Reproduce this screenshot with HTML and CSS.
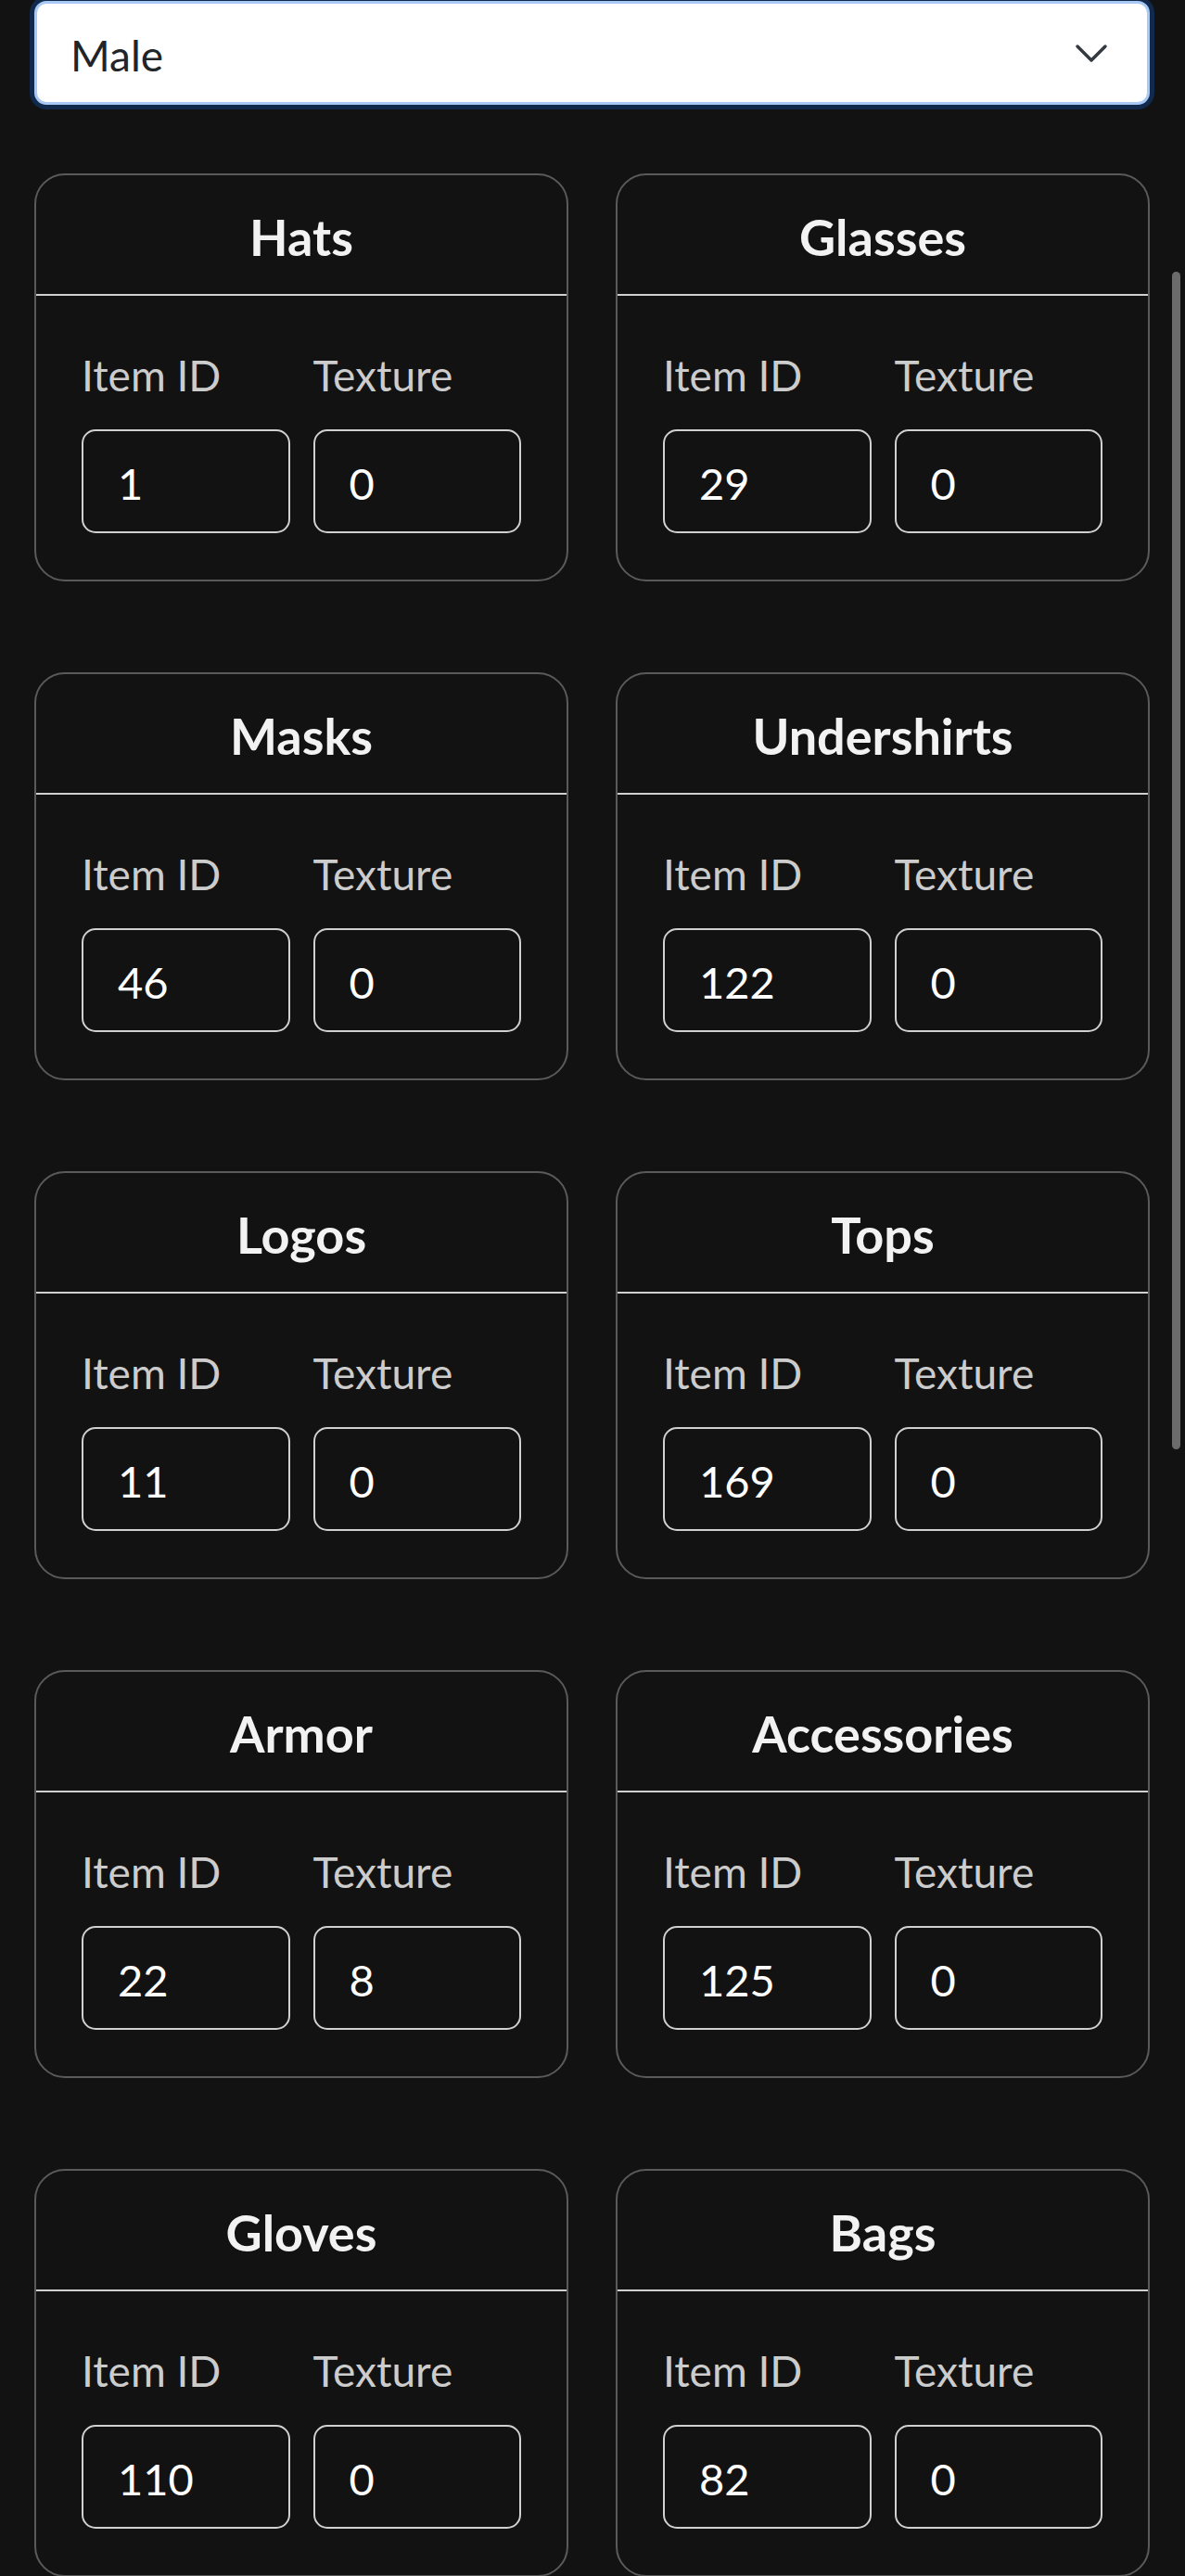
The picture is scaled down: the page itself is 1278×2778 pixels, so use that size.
FILE: index.html
```html
<!DOCTYPE html>
<html lang="en">
<head>
  <meta charset="UTF-8" />
  <meta name="viewport" content="width=device-width, initial-scale=1.0"/>
  <title>Clothing Editor</title>
  <link rel="stylesheet" href="styles.css">
</head>
<body>

<div class="page">
  <div class="select-wrap">
    <select class="gender-select" id="gender">
      <option selected>Male</option>
      <option>Female</option>
    </select>
    <svg class="chevron" width="36" height="22" viewBox="0 0 36 22">
      <polyline points="3,3 18,18 33,3" fill="none" stroke="#343a40" stroke-width="3.5" stroke-linecap="round" stroke-linejoin="round"/>
    </svg>
  </div>

  <div class="card-grid">
    <div class="card">
      <div class="card-header">Hats</div>
      <div class="card-body">
        <div class="field"><label>Item ID</label><input type="text" value="1"></div>
        <div class="field"><label>Texture</label><input type="text" value="0"></div>
      </div>
    </div>

    <div class="card">
      <div class="card-header">Glasses</div>
      <div class="card-body">
        <div class="field"><label>Item ID</label><input type="text" value="29"></div>
        <div class="field"><label>Texture</label><input type="text" value="0"></div>
      </div>
    </div>

    <div class="card">
      <div class="card-header">Masks</div>
      <div class="card-body">
        <div class="field"><label>Item ID</label><input type="text" value="46"></div>
        <div class="field"><label>Texture</label><input type="text" value="0"></div>
      </div>
    </div>

    <div class="card">
      <div class="card-header">Undershirts</div>
      <div class="card-body">
        <div class="field"><label>Item ID</label><input type="text" value="122"></div>
        <div class="field"><label>Texture</label><input type="text" value="0"></div>
      </div>
    </div>

    <div class="card">
      <div class="card-header">Logos</div>
      <div class="card-body">
        <div class="field"><label>Item ID</label><input type="text" value="11"></div>
        <div class="field"><label>Texture</label><input type="text" value="0"></div>
      </div>
    </div>

    <div class="card">
      <div class="card-header">Tops</div>
      <div class="card-body">
        <div class="field"><label>Item ID</label><input type="text" value="169"></div>
        <div class="field"><label>Texture</label><input type="text" value="0"></div>
      </div>
    </div>

    <div class="card">
      <div class="card-header">Armor</div>
      <div class="card-body">
        <div class="field"><label>Item ID</label><input type="text" value="22"></div>
        <div class="field"><label>Texture</label><input type="text" value="8"></div>
      </div>
    </div>

    <div class="card">
      <div class="card-header">Accessories</div>
      <div class="card-body">
        <div class="field"><label>Item ID</label><input type="text" value="125"></div>
        <div class="field"><label>Texture</label><input type="text" value="0"></div>
      </div>
    </div>

    <div class="card">
      <div class="card-header">Gloves</div>
      <div class="card-body">
        <div class="field"><label>Item ID</label><input type="text" value="110"></div>
        <div class="field"><label>Texture</label><input type="text" value="0"></div>
      </div>
    </div>

    <div class="card">
      <div class="card-header">Bags</div>
      <div class="card-body">
        <div class="field"><label>Item ID</label><input type="text" value="82"></div>
        <div class="field"><label>Texture</label><input type="text" value="0"></div>
      </div>
    </div>
  </div>
</div>

<div class="scroll-thumb"></div>

</body>
</html>
```

FILE: styles.css
```css
* { box-sizing: border-box; margin: 0; padding: 0; font-family: Lato, "Open Sans", sans-serif; }
html, body { overflow: hidden; }
body { background: #121212; color: #f2f2f2; }
.page { padding: 1px 38px 0 37px; }

.select-wrap { position: relative; }
.gender-select {
  display: block; width: 100%; height: 112px;
  padding: 4px 80px 0 36px;
  font-size: 46px; color: #212529; background: #fff;
  border: 3px solid #a9c9f5; border-radius: 13px;
  box-shadow: 0 0 0 5px rgba(13,110,253,0.25);
  appearance: none; -webkit-appearance: none; outline: none;
}
.chevron { position: absolute; right: 45px; top: 46px; pointer-events: none; }

.card-grid {
  display: grid; grid-template-columns: 1fr 1fr;
  column-gap: 51px; row-gap: 98px;
  margin-top: 74px;
}
.card {
  height: 440px;
  background: #121212;
  border: 2px solid #5a5a5a; border-radius: 33px;
}
.card-header {
  height: 130px; padding: 34px 0 29px;
  font-size: 54px; font-weight: 700; line-height: 65px;
  text-align: center; color: #f2f2f2;
  border-bottom: 2px solid #d0d0d0;
}
.card-body {
  display: grid; grid-template-columns: 1fr 1fr; column-gap: 25px;
  padding: 58px 49px 0;
}
.field { min-width: 0; }
.field label {
  display: block; font-size: 46px; line-height: 55px;
  color: #cccccc; margin-bottom: 31px;
}
.field input {
  display: block; width: 100%; height: 112px;
  padding: 4px 20px 0 37px;
  font-size: 47px; color: #fff; background: #121212;
  border: 2px solid #d0d0d0; border-radius: 15px; outline: none;
}

.scroll-thumb {
  position: absolute; top: 293px; right: 5px;
  width: 9px; height: 1270px;
  background: #6b6b6b; border-radius: 5px;
}
```
